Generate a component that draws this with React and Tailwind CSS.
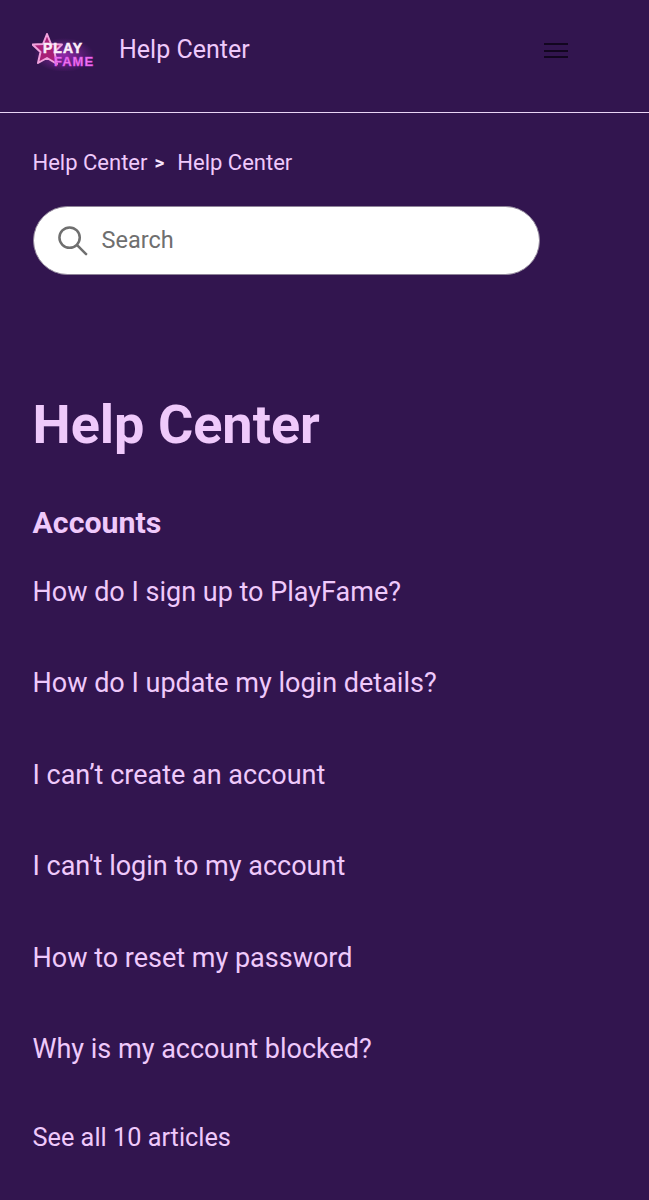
import React from 'react'

const articles = [
  'How do I sign up to PlayFame?',
  'How do I update my login details?',
  'I can’t create an account',
  "I can't login to my account",
  'How to reset my password',
  'Why is my account blocked?',
]

function Logo() {
  return (
    <div className="relative w-[64px] h-[38px] shrink-0">
      <svg viewBox="0 0 64 38" className="absolute inset-0 w-full h-full">
        <defs>
          <radialGradient id="glow" cx="0.5" cy="0.5" r="0.5">
            <stop offset="0%" stopColor="#a12bb8" stopOpacity="0.85" />
            <stop offset="100%" stopColor="#a12bb8" stopOpacity="0" />
          </radialGradient>
        </defs>
        <ellipse cx="32" cy="22" rx="30" ry="17" fill="url(#glow)" />
        <path d="M15 1 L19 11 L30 11.5 L22.5 19 L25 31 L15 25 L6 30 L8.5 19 L0.5 11.5 L11 11 Z" fill="#a81f76" stroke="#f0a2dc" strokeWidth="2" strokeLinejoin="round" />
      </svg>
      <span className="absolute left-[11px] top-[10px] font-['Liberation_Sans',sans-serif] font-bold text-[14px] leading-[11px] tracking-[1px] text-[#fbeefa] [-webkit-text-stroke:0.5px_#fbeefa]">PLAY</span>
      <span className="absolute left-[22px] top-[23px] font-['Liberation_Sans',sans-serif] font-bold text-[13px] leading-[11px] tracking-[1px] text-[#f27ff2] [-webkit-text-stroke:0.5px_#d43fe0]">FAME</span>
    </div>
  )
}

export default function App() {
  return (
    <div className="w-[649px] h-[1200px] overflow-hidden bg-[#32154f] text-[#efc9fb] font-['Roboto',sans-serif]">
      <header className="h-[113px] border-b border-[#e9d5f5] flex items-center pl-[32px] pr-[81px] pb-[9px]">
        <Logo />
        <span className="ml-[23px] text-[25px] leading-[30px] -mt-[3px]">Help Center</span>
        <div className="ml-auto flex flex-col gap-[4.5px] -mt-[2px]">
          <span className="block w-[24px] h-[2px] bg-[#120620]" />
          <span className="block w-[24px] h-[2px] bg-[#120620]" />
          <span className="block w-[24px] h-[2px] bg-[#120620]" />
        </div>
      </header>

      <main className="pl-[32.5px] pr-[33px]">
        <nav className="mt-[36px] flex items-center text-[22px] leading-[28px]">
          <span>Help Center</span>
          <span className="ml-[7px] mr-[13px] text-[19px] font-bold text-[#f6e4fd]">&gt;</span>
          <span>Help Center</span>
        </nav>

        <div className="mt-[29px] w-[507px] h-[69px] rounded-full bg-white border border-[#8f8499] flex items-center pl-[23px]">
          <svg width="31" height="31" viewBox="0 0 32 32" fill="none" stroke="#6f6f6f" strokeWidth="2.6" strokeLinecap="round">
            <circle cx="13" cy="13" r="10.5" />
            <path d="M21 21 L30 30" />
          </svg>
          <span className="ml-[14px] text-[23.5px] text-[#6f6f6f]">Search</span>
        </div>

        <h1 className="mt-[115px] text-[54px] leading-[70px] font-bold">Help Center</h1>

        <h2 className="mt-[45px] text-[30.3px] leading-[36px] font-bold">Accounts</h2>

        <ul className="mt-[34px] flex flex-col gap-[57.4px]">
          {articles.map((a) => (
            <li key={a} className="text-[27px] leading-[34px]">{a}</li>
          ))}
        </ul>

        <p className="mt-[55px] text-[25.3px] leading-[34px]">See all 10 articles</p>
      </main>
    </div>
  )
}
